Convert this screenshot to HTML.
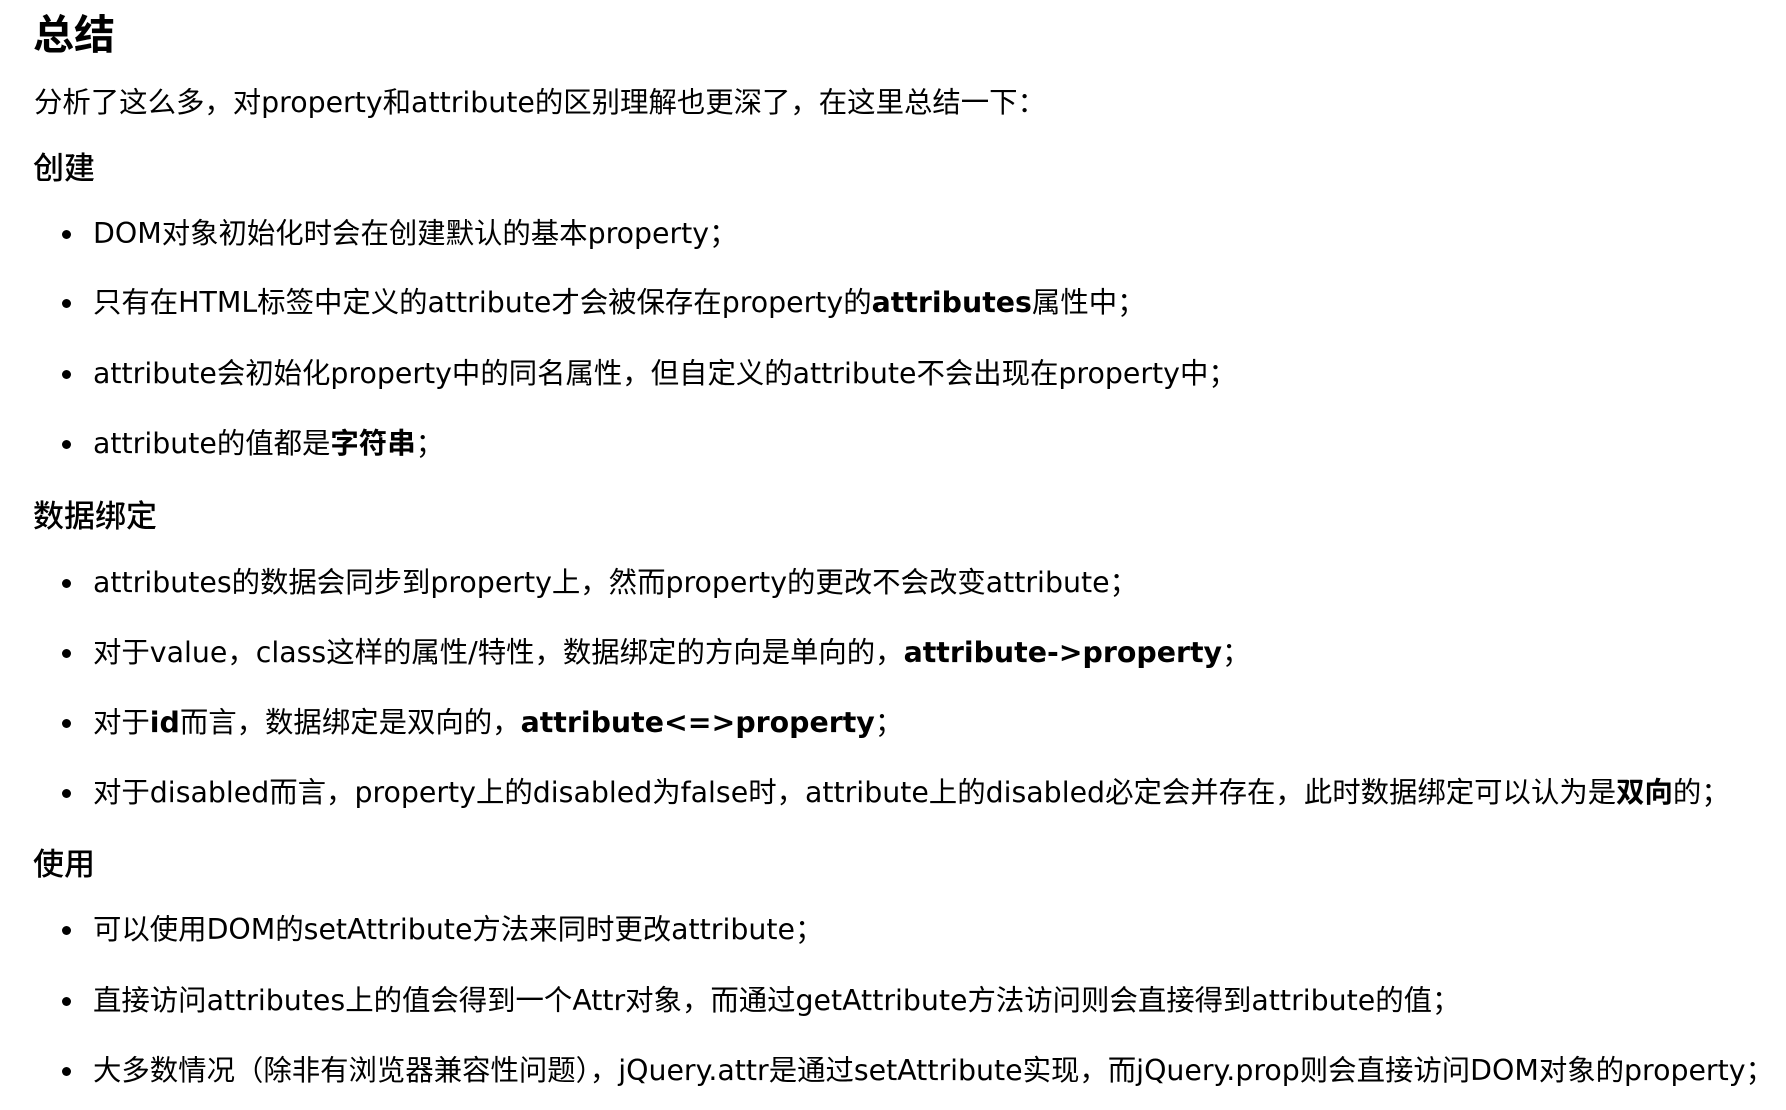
<!DOCTYPE html>
<html><head><meta charset="utf-8"><style>
html,body{margin:0;padding:0;background:#fff;width:1786px;height:1110px;overflow:hidden}
body{font-family:"DejaVu Sans","Liberation Sans","Noto Sans CJK SC",sans-serif;color:#000;position:relative}
.l{position:absolute;left:93px;white-space:nowrap;font-size:28.4px;line-height:40px}
.p{left:34px}
.h{position:absolute;left:33px;white-space:nowrap;font-weight:500;font-family:"Noto Sans CJK SC",sans-serif}
.h1{font-size:41px;line-height:50px;font-weight:bold}
.h3{font-size:31px;line-height:40px}
.d{position:absolute;left:62px;width:9px;height:9px;border-radius:50%;background:#000}
b{font-weight:bold}
</style></head><body>
<div class="h h1" style="top:6px">总结</div>
<div class="l p" style="top:83px">分析了这么多，对property和attribute的区别理解也更深了，在这里总结一下：</div>
<div class="h h3" style="top:146px">创建</div>

<div class="d" style="top:230px"></div><div class="l" style="top:214px">DOM对象初始化时会在创建默认的基本property；</div>
<div class="d" style="top:299px"></div><div class="l" style="top:283px">只有在HTML标签中定义的attribute才会被保存在property的<b>attributes</b>属性中；</div>
<div class="d" style="top:370px"></div><div class="l" style="top:354px">attribute会初始化property中的同名属性，但自定义的attribute不会出现在property中；</div>
<div class="d" style="top:440px"></div><div class="l" style="top:424px">attribute的值都是<b>字符串</b>；</div>

<div class="h h3" style="top:494px">数据绑定</div>
<div class="d" style="top:579px"></div><div class="l" style="top:563px">attributes的数据会同步到property上，然而property的更改不会改变attribute；</div>
<div class="d" style="top:649px"></div><div class="l" style="top:633px">对于value，class这样的属性/特性，数据绑定的方向是单向的，<b>attribute-&gt;property</b>；</div>
<div class="d" style="top:719px"></div><div class="l" style="top:703px">对于<b>id</b>而言，数据绑定是双向的，<b>attribute&lt;=&gt;property</b>；</div>
<div class="d" style="top:789px"></div><div class="l" style="top:773px">对于disabled而言，property上的disabled为false时，attribute上的disabled必定会并存在，此时数据绑定可以认为是<b>双向</b>的；</div>

<div class="h h3" style="top:842px">使用</div>
<div class="d" style="top:926px"></div><div class="l" style="top:910px">可以使用DOM的setAttribute方法来同时更改attribute；</div>
<div class="d" style="top:997px"></div><div class="l" style="top:981px">直接访问attributes上的值会得到一个Attr对象，而通过getAttribute方法访问则会直接得到attribute的值；</div>
<div class="d" style="top:1067px"></div><div class="l" style="top:1051px">大多数情况（除非有浏览器兼容性问题），jQuery.attr是通过setAttribute实现，而jQuery.prop则会直接访问DOM对象的property；</div>
</body></html>
